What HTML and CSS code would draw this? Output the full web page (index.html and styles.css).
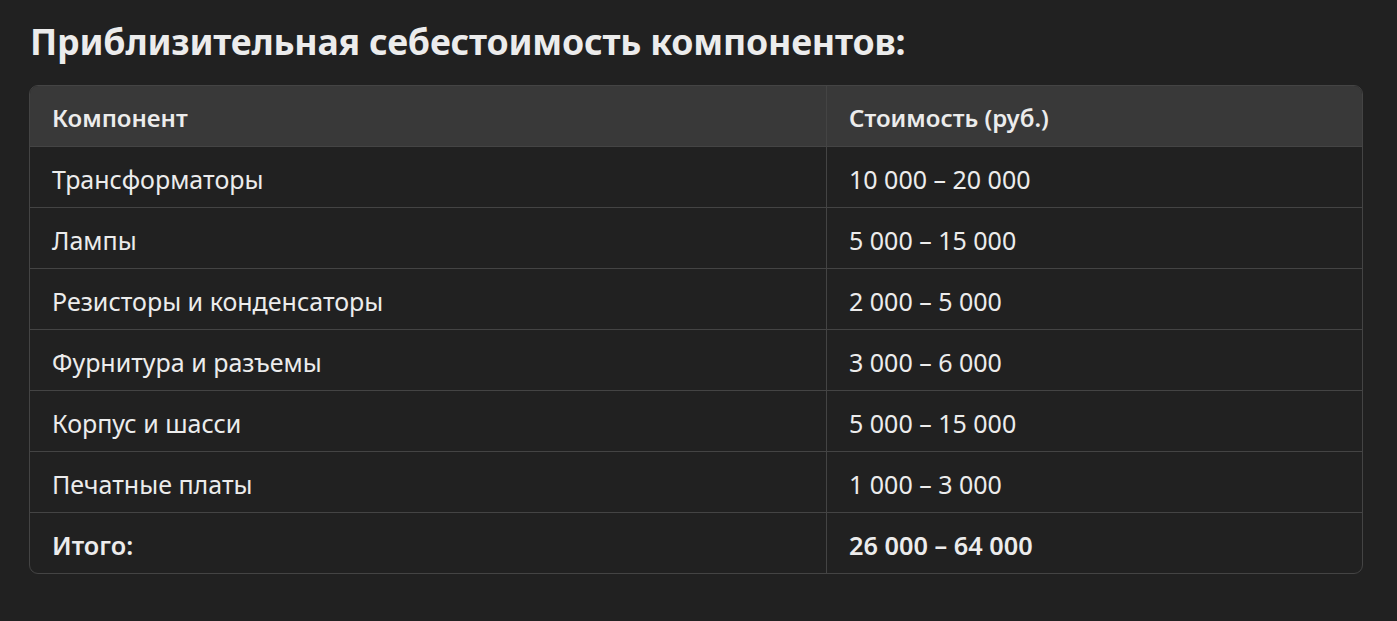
FILE: index.html
```html
<!DOCTYPE html>
<html lang="ru">
<head>
<meta charset="utf-8">
<link rel="stylesheet" href="styles.css">
</head>
<body>
<main class="page">
  <h3 class="title">Приблизительная себестоимость компонентов:</h3>
  <div class="table-wrap">
    <table class="cost">
      <thead>
        <tr><th class="c1">Компонент</th><th>Стоимость (руб.)</th></tr>
      </thead>
      <tbody>
        <tr><td>Трансформаторы</td><td>10 000 – 20 000</td></tr>
        <tr><td>Лампы</td><td>5 000 – 15 000</td></tr>
        <tr><td>Резисторы и конденсаторы</td><td>2 000 – 5 000</td></tr>
        <tr><td>Фурнитура и разъемы</td><td>3 000 – 6 000</td></tr>
        <tr><td>Корпус и шасси</td><td>5 000 – 15 000</td></tr>
        <tr><td>Печатные платы</td><td>1 000 – 3 000</td></tr>
        <tr class="total"><td>Итого:</td><td>26 000 – 64 000</td></tr>
      </tbody>
    </table>
  </div>
</main>
</body>
</html>
```
FILE: styles.css
```css
html, body {
  margin: 0;
  padding: 0;
  background: #212121;
}
body {
  font-family: "Noto Sans", "Open Sans", sans-serif;
  color: #ececec;
}
.page {
  padding: 16px 34px 0 29px;
}
.title {
  margin: 0 0 19px 1px;
  font-size: 35.7px;
  font-weight: 700;
  line-height: 50px;
  color: #ececec;
  letter-spacing: -0.2px;
}
.table-wrap {
  border: 1px solid #444;
  border-radius: 9px;
  overflow: hidden;
}
.cost {
  width: 100%;
  border-collapse: collapse;
  table-layout: fixed;
}
.cost th, .cost td {
  height: 57px;
  padding: 3px 22px 0;
  text-align: left;
  vertical-align: middle;
  font-size: 25px;
  border-bottom: 1px solid #444;
}
.cost th {
  background: #393939;
  font-weight: 600;
  font-size: 24px;
}
.cost th.c1 { width: 752px; }
.cost th:first-child, .cost td:first-child {
  border-right: 1px solid #444;
}
.cost td { font-weight: 400; }
.cost tr:last-child td { border-bottom: none; }
.cost .total td { font-weight: 600; font-size: 25.3px; }
```
